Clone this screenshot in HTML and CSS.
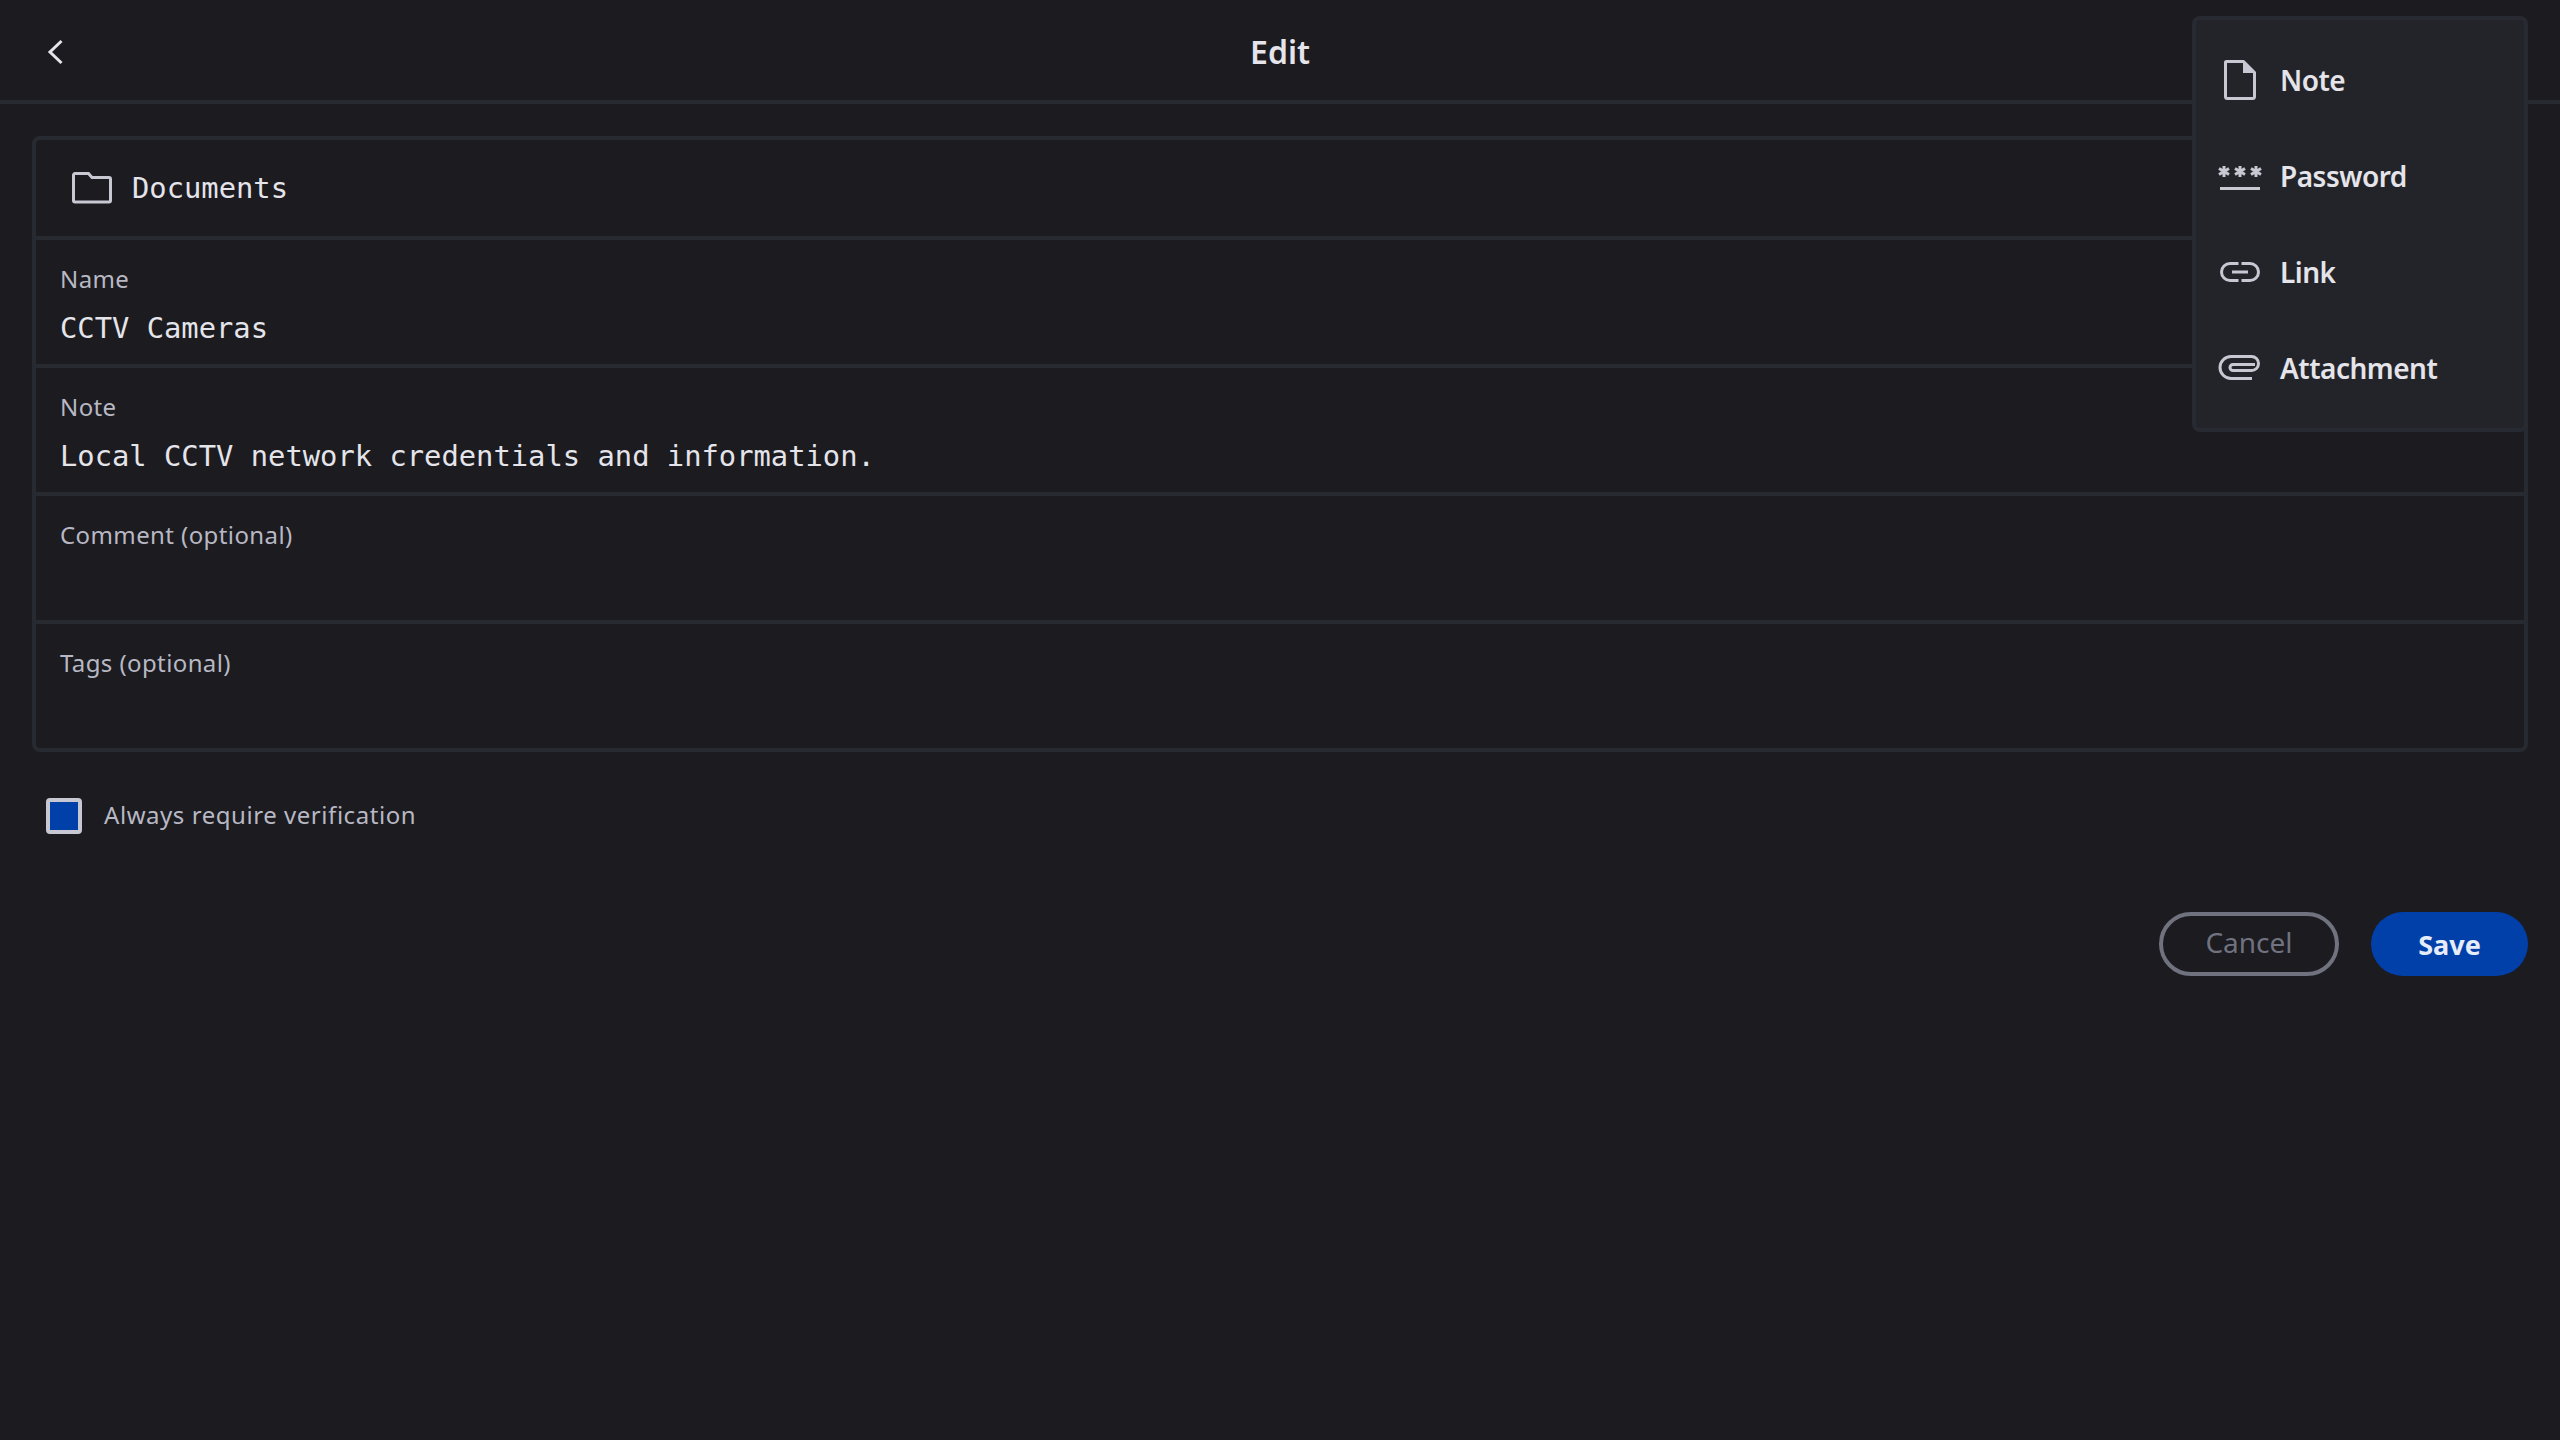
FILE: index.html
```html
<!DOCTYPE html>
<html lang="en">
<head>
<meta charset="utf-8">
<title>Edit</title>
<link rel="stylesheet" href="styles.css">
</head>
<body>
<header class="topbar">
  <svg class="back" viewBox="0 0 16 26" width="16" height="26"><path d="M14.500 2 3 13l11.500 11" fill="none" stroke="currentColor" stroke-width="3"/></svg>
  <h1 class="title">Edit</h1>
</header>
<main class="content">
  <section class="card">
    <div class="folder-row">
      <svg class="folder" viewBox="0 0 40 32" width="40" height="32"><path d="M1.500 3a1.500 1.500 0 0 1 1.500-1.500h13.500l3.500 4h17a1.500 1.500 0 0 1 1.500 1.500v21.500a1.500 1.500 0 0 1-1.500 1.500H3a1.500 1.500 0 0 1-1.500-1.500z" fill="none" stroke="currentColor" stroke-width="3"/></svg>
      <span class="mono">Documents</span>
    </div>
    <div class="field"><div class="label">Name</div><div class="mono">CCTV Cameras</div></div>
    <div class="field"><div class="label">Note</div><div class="mono">Local CCTV network credentials and information.</div></div>
    <div class="field"><div class="label">Comment (optional)</div></div>
    <div class="field"><div class="label">Tags (optional)</div></div>
  </section>
  <label class="check-row"><span class="checkbox"></span><span class="check-label">Always require verification</span></label>
  <div class="actions">
    <button class="btn cancel">Cancel</button>
    <button class="btn save">Save</button>
  </div>
</main>
<nav class="menu">
  <div class="menu-item">
    <svg class="menu-icon" viewBox="0 0 40 40"><path d="M6 1.500h17.500l11 11V36.500a2 2 0 0 1-2 2H7.500a2 2 0 0 1-2-2V2z" fill="none" stroke="currentColor" stroke-width="3" stroke-linejoin="round"/><path d="M23 1.500 35.500 13H23z" fill="currentColor"/></svg>
    <span>Note</span>
  </div>
  <div class="menu-item">
    <svg class="menu-icon" viewBox="0 0 40 40"><path d="M0 32.500h40" stroke="currentColor" stroke-width="3"/><g stroke="currentColor" stroke-width="3"><path d="M4 10v11M-1 12.500 9 18.500M9 12.500-1 18.500"/><path d="M20 10v11M15 12.500 25 18.500M25 12.500 15 18.500"/><path d="M36 10v11M31 12.500 41 18.500M41 12.500 31 18.500"/></g></svg>
    <span>Password</span>
  </div>
  <div class="menu-item">
    <svg class="menu-icon" viewBox="0 0 40 40"><path d="M18.500 11.500H10a8.500 8.500 0 0 0 0 17h8.500M21.500 11.500H30a8.500 8.500 0 0 1 0 17h-8.500M12 20h16" fill="none" stroke="currentColor" stroke-width="3"/></svg>
    <span>Link</span>
  </div>
  <div class="menu-item">
    <svg class="menu-icon" viewBox="0 0 40 40"><path d="M32 30.500H11a11 11 0 0 1 0-22h20.500a7 7 0 0 1 0 14H13a3 3 0 0 1 0-6h22" fill="none" stroke="currentColor" stroke-width="3"/></svg>
    <span>Attachment</span>
  </div>
</nav>
</body>
</html>
```
FILE: styles.css
```css
* { box-sizing: border-box; }
html, body { margin: 0; padding: 0; height: 100%; }
body {
  background: #1b1b20;
  color: #e4e4ea;
  font-family: "Noto Sans", "Open Sans", sans-serif;
  overflow: hidden;
}
.topbar {
  height: 104px;
  border-bottom: 4px solid #282a32;
  display: flex;
  align-items: center;
  justify-content: center;
  position: relative;
}
.back { position: absolute; left: 47px; top: 39px; color: #e4e4ea; }
.title { margin: 2px 0 0; font-size: 32px; font-weight: 600; color: #e4e4ea; }
.content { padding: 32px; }
.card { border: 4px solid #282a32; border-radius: 8px; }
.folder-row {
  height: 96px;
  display: flex;
  align-items: center;
  padding-left: 36px;
  gap: 20px;
  color: #c8c8d2;
}
.folder { flex: none; }
.mono {
  font-family: "DejaVu Sans Mono", monospace;
  font-size: 28.8px;
  color: #e4e4ea;
}
.field {
  height: 128px;
  border-top: 4px solid #282a32;
  padding: 23px 25px 0 24px;
}
.label { font-size: 24px; line-height: 32px; letter-spacing: 0.4px; color: #b8b8c4; margin-bottom: 15px; }
.field .mono { line-height: 36px; }
.check-row { display: flex; align-items: center; gap: 22px; margin: 46px 0 0 14px; }
.checkbox {
  width: 36px;
  height: 36px;
  background: #0040a8;
  border: 4px solid #c8c8d2;
  border-radius: 4px;
}
.check-label { font-size: 24px; letter-spacing: 0.55px; color: #b8b8c4; padding-bottom: 3px; }
.actions { display: flex; justify-content: flex-end; gap: 32px; margin-top: 78px; }
.btn { height: 64px; border-radius: 32px; font-family: inherit; font-size: 28px; padding: 0; }
.cancel { width: 180px; background: transparent; border: 4px solid #70727f; color: #70727f; padding-bottom: 5px; }
.save { width: 157px; background: #0040a8; border: 0; color: #e6ecfa; font-weight: 700; font-size: 27px; }
.menu {
  position: absolute;
  left: 2192px;
  top: 16px;
  width: 336px;
  height: 416px;
  padding: 12px 0;
  background: #232429;
  border: 4px solid #282a32;
  border-radius: 8px;
}
.menu-item {
  height: 96px;
  display: flex;
  align-items: center;
  gap: 20px;
  padding-left: 24px;
  font-size: 28px;
  font-weight: 600;
  letter-spacing: -0.5px;
  color: #e4e4ea;
}
.menu-icon { width: 40px; height: 40px; color: #c8c8d2; flex: none; overflow: visible; }
```
